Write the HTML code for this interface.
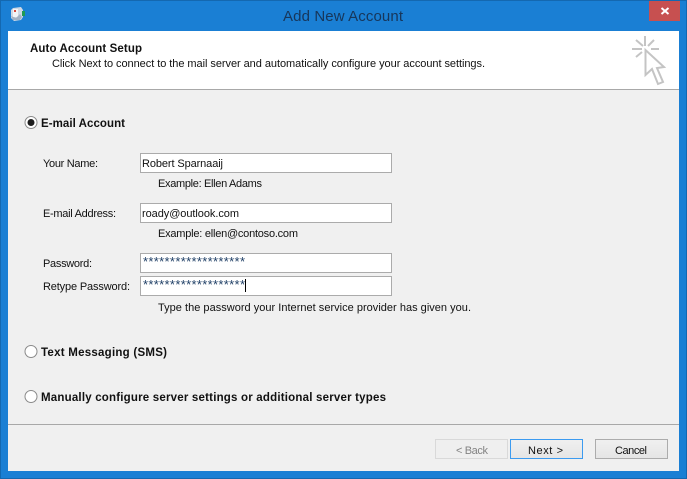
<!DOCTYPE html>
<html>
<head>
<meta charset="utf-8">
<style>
html,body{margin:0;padding:0;background:#1a7fd4;width:687px;height:479px;overflow:hidden}
svg{display:block}
text{font-family:"Liberation Sans",Arial,sans-serif;font-size:11px;fill:#111}
.b{font-weight:bold;font-size:11.5px}
</style>
</head>
<body>
<svg width="687" height="479" viewBox="0 0 687 479" xmlns="http://www.w3.org/2000/svg">
<rect x="0" y="0" width="687" height="479" fill="#1a7fd4"/>
<rect x="0.5" y="0.5" width="686" height="478" fill="none" stroke="#1468b0"/>
<!-- app icon -->
<path d="M11 10 L13 8 L21 7 L23 10 L23 17 L21 20 L14 21 L11 18 Z" fill="#cfd8e4"/>
<rect x="13" y="9" width="5" height="8" fill="#f2f4f7"/>
<rect x="14" y="10" width="2" height="2" fill="#d84a3c"/>
<rect x="22" y="11" width="3" height="5" fill="#1f9a55"/>
<path d="M11 16 L13 20 L20 20 L22 17 L20 14 L16 18 Z" fill="#a4b2c4"/>
<!-- title -->
<text x="283" y="21" textLength="120" lengthAdjust="spacing" style="font-size:15px;fill:#17365a">Add New Account</text>
<!-- close -->
<rect x="649" y="1" width="31" height="20" fill="#c75050"/>
<path d="M661.500 8 L668.500 14 M668.500 8 L661.500 14" stroke="#fff" stroke-width="2"/>
<!-- client -->
<rect x="8" y="31" width="671" height="440" fill="#f0f0f0"/>
<rect x="8" y="31" width="671" height="58" fill="#fff"/>
<rect x="8" y="89" width="671" height="1" fill="#a8a8a8"/>
<text class="b" x="30" y="52" textLength="112" lengthAdjust="spacing">Auto Account Setup</text>
<text x="52" y="67" textLength="433" lengthAdjust="spacing">Click Next to connect to the mail server and automatically configure your account settings.</text>
<!-- cursor -->
<g stroke="#c4c4c4" stroke-width="2" fill="none">
<path d="M645 36 V46 M632 49 H642 M651 49 H659 M636 40 L643 46 M654 40 L648 46 M636 57 L642 52"/>
<path d="M645.5 50 V75 L652 69 L658 84 L663 82 L657 68 L664 67 Z"/>
</g>
<!-- radios -->
<circle cx="31" cy="122.500" r="6" fill="#fff" stroke="#8a8a8a"/>
<circle cx="31" cy="122.500" r="3.500" fill="#1c1c1c"/>
<text class="b" x="41" y="127" textLength="84" lengthAdjust="spacing">E-mail Account</text>
<circle cx="31" cy="351.500" r="6" fill="#fff" stroke="#8a8a8a"/>
<text class="b" x="41" y="356" textLength="126" lengthAdjust="spacing">Text Messaging (SMS)</text>
<circle cx="31" cy="396.500" r="6" fill="#fff" stroke="#8a8a8a"/>
<text class="b" x="41" y="401" textLength="345" lengthAdjust="spacing">Manually configure server settings or additional server types</text>
<!-- labels -->
<text x="43" y="167" textLength="55" lengthAdjust="spacing">Your Name:</text>
<text x="43" y="217" textLength="73" lengthAdjust="spacing">E-mail Address:</text>
<text x="43" y="267" textLength="49" lengthAdjust="spacing">Password:</text>
<text x="43" y="290" textLength="87" lengthAdjust="spacing">Retype Password:</text>
<!-- inputs -->
<g fill="#fff" stroke="#ababab">
<rect x="140.500" y="153.500" width="251" height="19"/>
<rect x="140.500" y="203.500" width="251" height="19"/>
<rect x="140.500" y="253.500" width="251" height="19"/>
<rect x="140.500" y="276.500" width="251" height="19"/>
</g>
<text x="142" y="167" textLength="81" lengthAdjust="spacing">Robert Sparnaaij</text>
<text x="142" y="217" textLength="97" lengthAdjust="spacing">roady@outlook.com</text>
<text x="143" y="266" textLength="102" lengthAdjust="spacing" style="font-size:13px;fill:#1f3f66">*******************</text>
<text x="143" y="289" textLength="102" lengthAdjust="spacing" style="font-size:13px;fill:#1f3f66">*******************</text>
<rect x="245" y="279" width="1" height="13" fill="#000"/>
<!-- hints -->
<text x="158" y="187" textLength="104" lengthAdjust="spacing">Example: Ellen Adams</text>
<text x="158" y="237" textLength="140" lengthAdjust="spacing">Example: ellen@contoso.com</text>
<text x="158" y="311" textLength="313" lengthAdjust="spacing">Type the password your Internet service provider has given you.</text>
<!-- bottom -->
<rect x="8" y="424" width="671" height="1" fill="#a8a8a8"/>
<defs>
<linearGradient id="g" x1="0" y1="0" x2="0" y2="1"><stop offset="0" stop-color="#f0f0f0"/><stop offset="1" stop-color="#e5e5e5"/></linearGradient>
</defs>
<rect x="435.500" y="439.500" width="72" height="19" fill="#efefef" stroke="#d9d9d9"/>
<text x="456" y="454" textLength="32" lengthAdjust="spacing" style="fill:#838383">&lt; Back</text>
<rect x="510.500" y="439.500" width="72" height="19" fill="url(#g)" stroke="#3c9bf0"/>
<text x="528" y="454" textLength="35" lengthAdjust="spacing">Next &gt;</text>
<rect x="595.500" y="439.500" width="72" height="19" fill="url(#g)" stroke="#acacac"/>
<text x="615" y="454" textLength="32" lengthAdjust="spacing">Cancel</text>
</svg>
</body>
</html>
